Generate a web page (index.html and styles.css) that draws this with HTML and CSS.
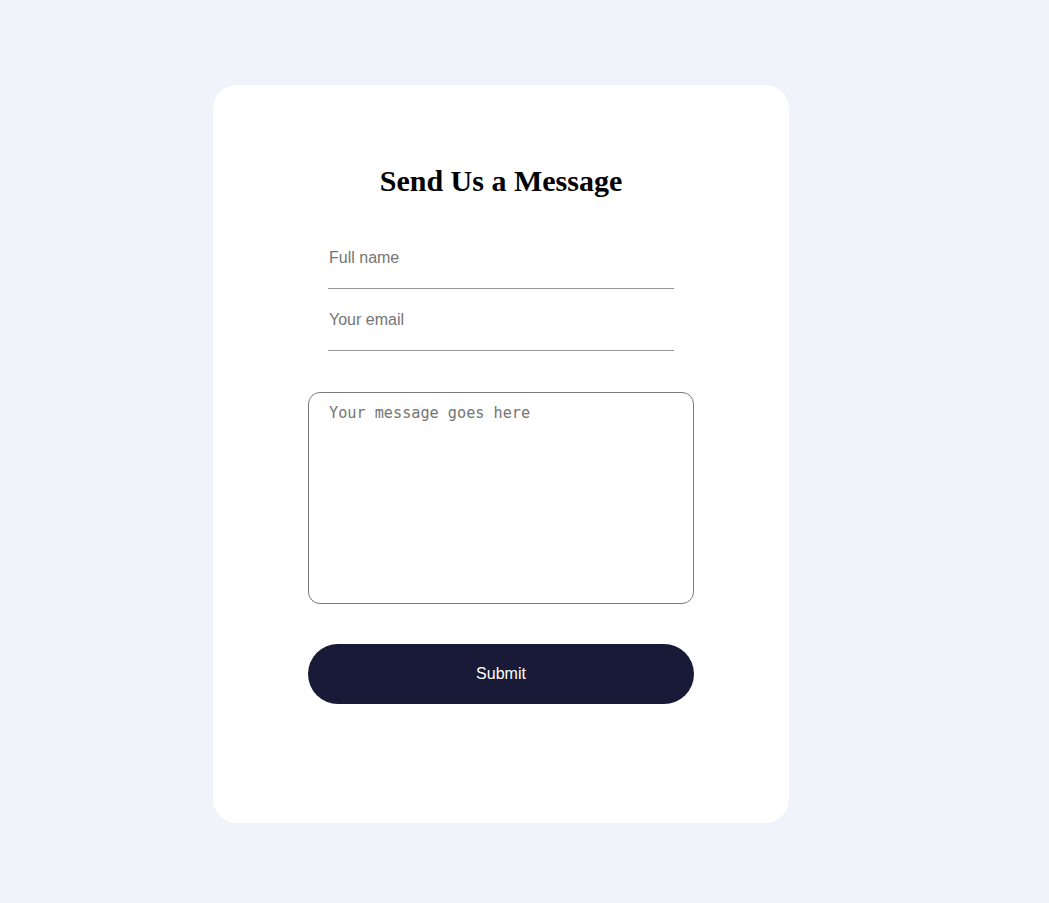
FILE: index.html
```html
<!DOCTYPE html>
<html lang="en">
<head>
<meta charset="utf-8">
<title>Contact</title>
<link rel="stylesheet" href="styles.css">
</head>
<body>
<div class="page">
  <form class="card">
    <h2 class="title">Send Us a Message</h2>
    <div class="fields">
      <input class="line-input" type="text" placeholder="Full name">
      <input class="line-input" type="email" placeholder="Your email">
    </div>
    <textarea class="message" placeholder="Your message goes here"></textarea>
    <button class="submit" type="button">Submit</button>
  </form>
</div>
</body>
</html>
```
FILE: styles.css
```css
html, body {
  margin: 0;
  padding: 0;
  background: #f2f2fb;
}
.page {
  padding: 85px 0 0 213px;
}
.card {
  box-sizing: border-box;
  width: 576px;
  height: 738px;
  background: #ffffff;
  border-radius: 24px;
  padding: 79px 95px 0;
  display: flex;
  flex-direction: column;
}
.title {
  margin: 0 0 40px;
  font-family: "Liberation Serif", "Times New Roman", serif;
  font-size: 30px;
  font-weight: bold;
  text-align: center;
  color: #000;
  line-height: 34px;
}
.fields {
  display: flex;
  flex-direction: column;
  gap: 11px;
  padding: 0 20px;
}
.line-input {
  box-sizing: border-box;
  height: 51px;
  padding: 11px 1px 21px;
  border: none;
  border-bottom: 1px solid #979797;
  font-family: "Liberation Sans", Arial, sans-serif;
  font-size: 16px;
  color: #222;
  outline: none;
  background: transparent;
}
.line-input::placeholder,
.message::placeholder {
  color: #757575;
}
.message {
  box-sizing: border-box;
  margin-top: 41px;
  height: 212px;
  width: 100%;
  padding: 11px 20px;
  border: 1px solid #7a7a7a;
  border-radius: 12px;
  font-family: "DejaVu Sans Mono", "Liberation Mono", monospace;
  font-size: 15.2px;
  resize: none;
  outline: none;
}
.submit {
  margin-top: 40px;
  height: 60px;
  width: 100%;
  border: none;
  border-radius: 30px;
  background: #181a37;
  color: #ffffff;
  font-family: "Liberation Sans", Arial, sans-serif;
  font-size: 16px;
  cursor: pointer;
}
```
